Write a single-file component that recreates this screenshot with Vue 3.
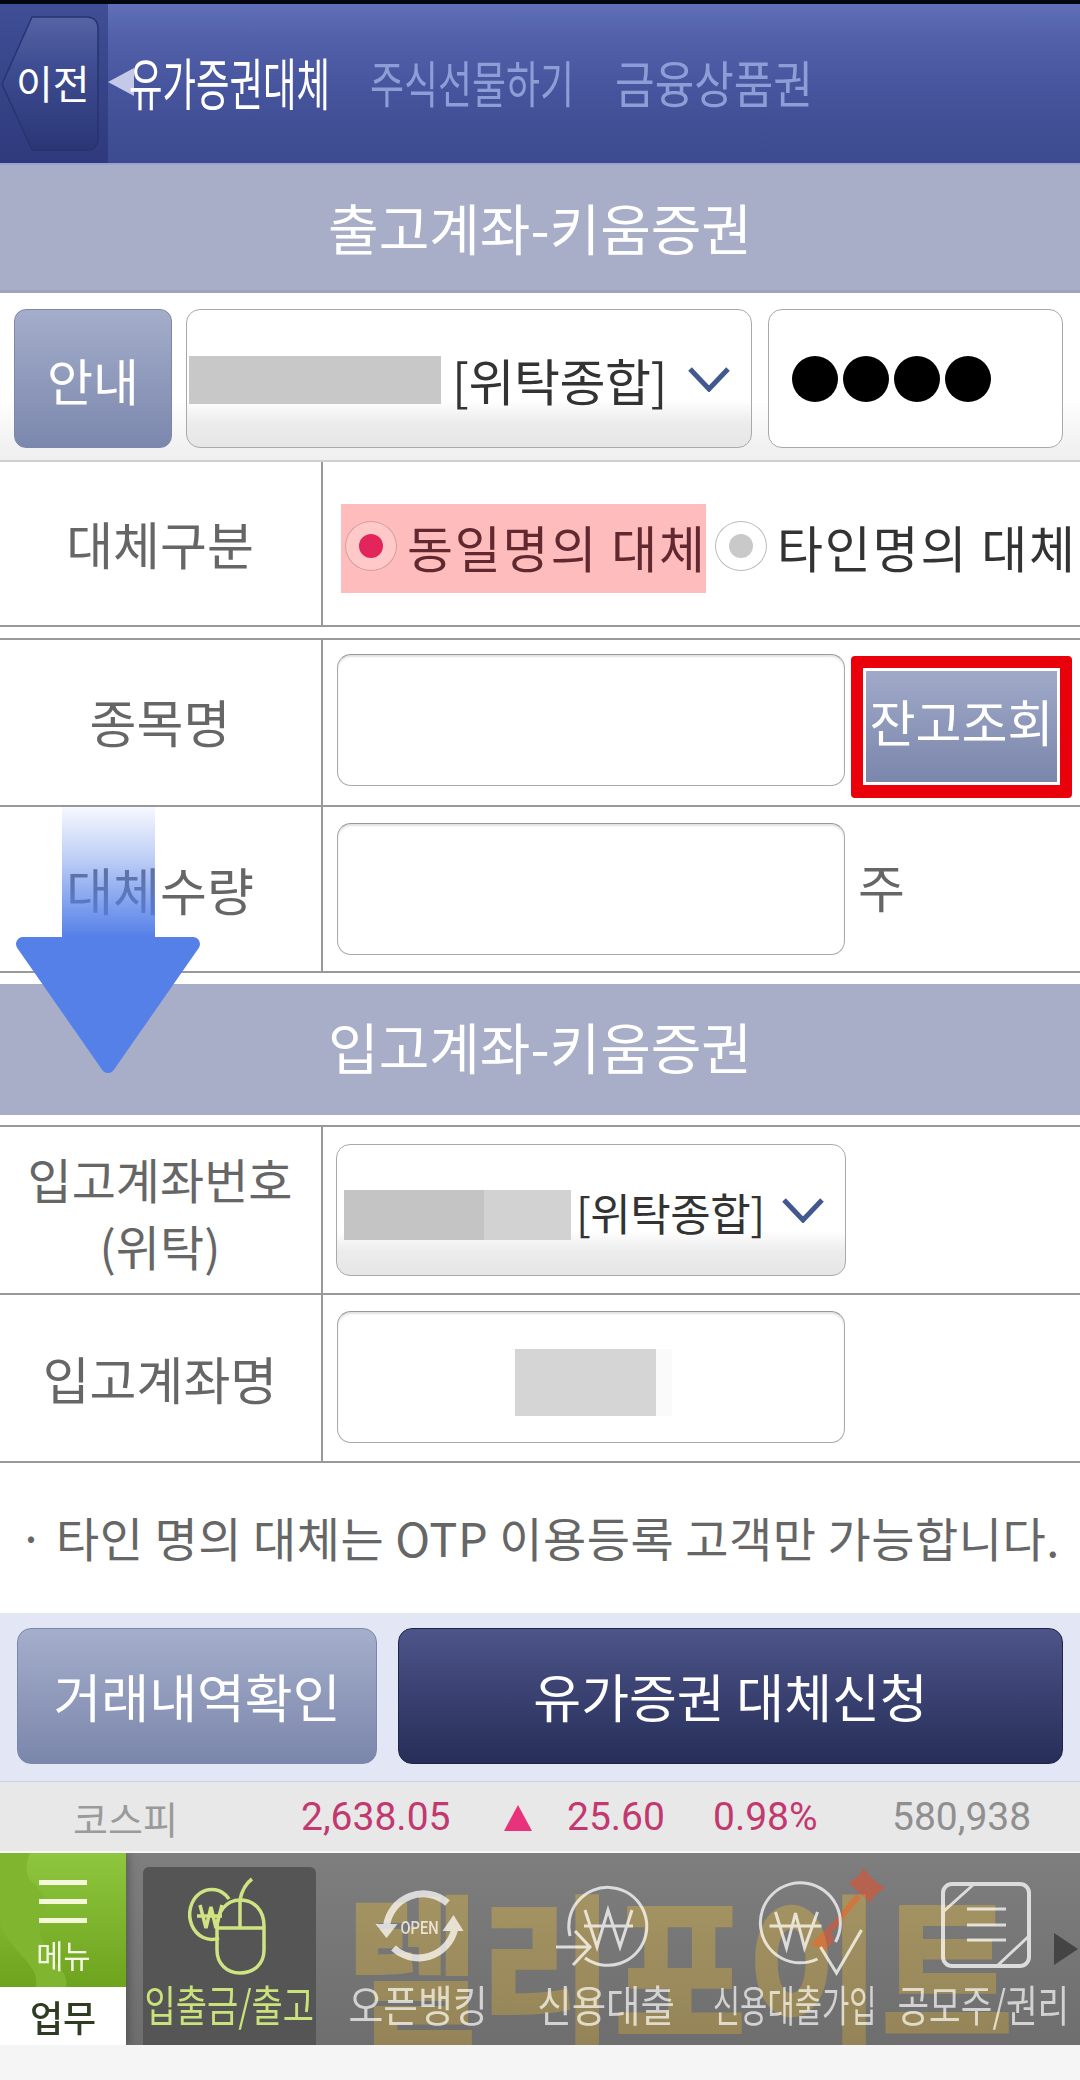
<script setup>
const tabs = [
  { key: 'mouse', label: '입출금/출고', sx: 0.79, box: '135 1868 188 110', active: true },
  { key: 'open', label: '오픈뱅킹', sx: 0.88, box: '323.5 1868 188 110' },
  { key: 'loan', label: '신용대출', sx: 0.87, box: '512 1868 188 110' },
  { key: 'join', label: '신용대출가입', sx: 0.69, box: '700.5 1868 188 110' },
  { key: 'ipo', label: '공모주/권리', sx: 0.8, box: '889 1868 188 110' }
]
const dots = [1, 2, 3, 4]
</script>

<template>
  <div class="page">
    <header class="top">
      <div class="back">
        <svg class="back-shape" viewBox="0 0 108 159" aria-hidden="true">
          <defs>
            <linearGradient id="bk" x1="0" y1="0" x2="0" y2="1">
              <stop offset="0" stop-color="#5664a6" />
              <stop offset="0.35" stop-color="#3f4d92" />
              <stop offset="1" stop-color="#2a3676" />
            </linearGradient>
          </defs>
          <path d="M2 80 L32 13 H86 Q98 13 98 25 V134 Q98 146 86 146 H32 Z" fill="url(#bk)" stroke="#28336f" stroke-width="1.5" />
        </svg>
        <span class="back-text">이전</span>
      </div>
      <div class="pointer"></div>
      <div class="ttab ttab-1"><span class="on">유가증권대체</span></div>
      <div class="ttab ttab-2"><span class="off s2">주식선물하기</span></div>
      <div class="ttab ttab-3"><span class="off s3">금융상품권</span></div>
    </header>

    <div class="section sec-1">출고계좌-키움증권</div>

    <div class="acct">
      <div class="info">안내</div>
      <div class="select sel-1">
        <i class="blur b1"></i>
        <span class="sel-text">[위탁종합]</span>
        <svg class="chev" viewBox="0 0 44 26" aria-hidden="true"><path d="M3 3 L22 23 L41 3" /></svg>
      </div>
      <div class="pw">
        <i v-for="d in dots" :key="d" class="dot"></i>
      </div>
    </div>

    <div class="row r-type">
      <div class="lab">대체구분</div>
      <div class="cell opts">
        <div class="opt picked">
          <span class="radio"><i class="rd red"></i></span>
          <span>동일명의 대체</span>
        </div>
        <div class="opt other">
          <span class="radio"><i class="rd gray"></i></span>
          <span>타인명의 대체</span>
        </div>
      </div>
    </div>

    <div class="row r-name">
      <div class="lab">종목명</div>
      <div class="cell fields">
        <div class="input"></div>
        <div class="redbox"><div class="query">잔고조회</div></div>
      </div>
    </div>

    <div class="row r-qty">
      <div class="lab">대체수량</div>
      <div class="cell fields">
        <div class="input"></div>
        <span class="unit">주</span>
      </div>
    </div>

    <div class="section sec-2">입고계좌-키움증권</div>

    <div class="row r-in">
      <div class="lab two">입고계좌번호<br />(위탁)</div>
      <div class="cell fields">
        <div class="select sel-2">
          <i class="blur b2"></i><i class="blur b3"></i>
          <span class="sel-text small">[위탁종합]</span>
          <svg class="chev" viewBox="0 0 44 26" aria-hidden="true"><path d="M3 3 L22 23 L41 3" /></svg>
        </div>
      </div>
    </div>

    <div class="row r-nm">
      <div class="lab">입고계좌명</div>
      <div class="cell fields">
        <div class="input nameval"><i class="blur b4"></i><i class="blur b5"></i></div>
      </div>
    </div>

    <p class="note">· 타인 명의 대체는 OTP 이용등록 고객만 가능합니다.</p>

    <div class="actions">
      <button class="btn light">거래내역확인</button>
      <button class="btn dark">유가증권 대체신청</button>
    </div>

    <div class="ticker">
      <span class="t-name">코스피</span>
      <span class="t-num n1">2,638.05</span>
      <i class="t-up"></i>
      <span class="t-num n2">25.60</span>
      <span class="t-num n3">0.98%</span>
      <span class="t-vol">580,938</span>
    </div>

    <nav class="nav">
      <div class="menu">
        <div class="menu-top">
          <svg class="swirl" viewBox="0 0 126 134" aria-hidden="true">
            <path d="M0 0 H30 C18 30 40 30 44 44 C52 70 30 60 44 90 C54 112 70 120 66 134 H36 C40 110 10 100 0 70 Z" fill="#7fb52f" />
          </svg>
          <div class="bars"><i></i><i></i><i></i></div>
          <span class="menu-text">메뉴</span>
        </div>
        <div class="menu-work">업무</div>
      </div>

      <div class="tabs">
        <div v-for="t in tabs" :key="t.key" class="tab" :class="{ active: t.active }">
          <div class="tab-in">
            <svg class="ico" :viewBox="t.box" aria-hidden="true">
              <g v-if="t.key === 'mouse'" class="st-g">
                <path d="M229 1899 A22 25 0 1 0 219 1938" />
                <path d="M200 1905 L206 1928 L211 1907 L216 1928 L222 1905 M197 1916 H222" stroke-width="2.5" />
                <path d="M240 1900 C226 1900 217 1912 217 1928 V1950 C217 1964 227 1973 240 1973 C254 1973 264 1964 264 1950 V1926 C264 1910 254 1900 240 1900 Z" />
                <path d="M217 1928 H264 M240 1900 V1928 M240 1900 C242 1890 245 1884 252 1879" />
              </g>
              <g v-else-if="t.key === 'open'">
                <path class="st-a" d="M386 1926 A37 37 0 0 1 447 1903" />
                <path class="st-a" d="M393 1948 A37 37 0 0 0 454 1930" />
                <path class="fl" d="M375 1924 H397 L386 1938 Z" />
                <path class="fl" d="M442 1931 H463 L453 1915 Z" />
                <text class="open-t" x="400" y="1934" textLength="38" lengthAdjust="spacingAndGlyphs">OPEN</text>
              </g>
              <g v-else-if="t.key === 'loan'" class="st-l">
                <path d="M570 1936 A39 39 0 1 1 585 1958" />
                <path d="M556 1947 H590 M575 1931 L590 1947 L573 1965" />
                <path d="M585 1910 L597 1947 L608 1910 L620 1947 L632 1910 M584 1926 H633" stroke-width="2.5" />
              </g>
              <g v-else-if="t.key === 'join'">
                <path class="dart" d="M816 1946 L858 1896" />
                <path class="dartf" d="M863 1868 C870 1878 878 1884 885 1888 C878 1892 873 1896 870 1903 C862 1896 854 1888 848 1883 C855 1879 860 1874 863 1868 Z" />
                <path class="dartf" d="M810 1945 C816 1938 822 1932 828 1927 C830 1933 832 1937 834 1940 C830 1944 827 1948 824 1951 C820 1948 815 1946 810 1945 Z" />
                <g class="st-l">
                  <path d="M817 1959 A40 40 0 1 1 835 1942" />
                  <path d="M820 1947 L836 1973 L861 1930" />
                  <path d="M775 1912 L786 1948 L795 1913 L804 1948 L817 1912 M769 1926 H821" stroke-width="2.5" />
                </g>
              </g>
              <g v-else class="st-l">
                <rect x="943" y="1884" width="86" height="82" rx="9" stroke-width="4" />
                <path d="M967 1909 H1006 M967 1925 H1006 M967 1940 H1006" stroke-width="3" />
                <path d="M944 1911 L973 1885 M997 1966 L1029 1936" stroke-width="9" />
              </g>
            </svg>
            <span class="tab-label" :style="{ transform: `scaleX(${t.sx})` }">{{ t.label }}</span>
          </div>
        </div>
      </div>

      <div class="watermark">텔리포이트</div>
      <i class="more"></i>
    </nav>

    <div class="foot"></div>

    <svg class="big-arrow" viewBox="0 800 220 280" aria-hidden="true">
      <defs>
        <linearGradient id="sh" x1="0" y1="805" x2="0" y2="937" gradientUnits="userSpaceOnUse">
          <stop offset="0" stop-color="#5580e8" stop-opacity="0.04" />
          <stop offset="0.4" stop-color="#5580e8" stop-opacity="0.38" />
          <stop offset="1" stop-color="#5580e8" stop-opacity="1" />
        </linearGradient>
      </defs>
      <rect x="62" y="805" width="93" height="132" fill="url(#sh)" />
      <path d="M23 944 H193 L108 1066 Z" fill="#5580e8" stroke="#5580e8" stroke-width="14" stroke-linejoin="round" />
    </svg>
  </div>
</template>

<style>
html, body { margin: 0; background: #fff; }
</style>

<style scoped>
.page {
  position: relative;
  width: 1080px;
  height: 2080px;
  overflow: hidden;
  background: #fff;
  font-family: "Noto Sans CJK KR", "Noto Sans", sans-serif;
  white-space: nowrap;
}
.top {
  display: flex;
  align-items: center;
  height: 159px;
  border-top: 4px solid #04060f;
  background: linear-gradient(#6070b8 0%, #5261a9 20%, #45549c 55%, #3c4a8e 100%);
  box-shadow: inset 0 -1px 0 #3a488c;
}
.back {
  position: relative;
  flex: none;
  width: 108px;
  height: 159px;
  background: linear-gradient(#3f4e96, #2e3a7c);
  display: flex;
  align-items: center;
}
.back-shape { position: absolute; inset: 0; width: 108px; height: 159px; }
.back-text {
  position: relative;
  margin-left: 16px;
  color: #fff;
  font-size: 40px;
  line-height: 1;
  margin-top: -4px;
}
.pointer {
  flex: none;
  width: 0;
  height: 0;
  border-top: 14px solid transparent;
  border-bottom: 14px solid transparent;
  border-right: 26px solid #c3c9e6;
  margin-top: -4px;
}
.ttab {
  flex: none;
  width: 200px;
  height: 60px;
  display: flex;
  justify-content: center;
  align-items: center;
  margin-top: -6px;
}
.ttab-1 { margin-left: -4px; }
.ttab-2 { margin-left: 42px; }
.ttab-3 { margin-left: 43px; width: 198px; }
.ttab span { flex: none; line-height: 1; }
.on { color: #fff; font-size: 56px; transform: scaleX(0.65); }
.off { color: #8f9dd6; font-size: 50px; }
.s2 { transform: scaleX(0.74); }
.s3 { transform: scaleX(0.86); }

.section {
  display: flex;
  align-items: center;
  justify-content: center;
  box-sizing: border-box;
  background: #a8aec8;
  color: #fff;
  font-size: 55px;
  line-height: 1;
}
.sec-1 {
  height: 130px;
  padding-bottom: 4px;
  box-shadow: inset 0 2px 0 #98a4cf, inset 0 -3px 0 #9ea4bc;
}
.sec-2 { height: 131px; margin-top: 11px; padding-bottom: 8px; }

.acct {
  display: flex;
  height: 169px;
  box-sizing: border-box;
  padding: 16px 17px 0 14px;
  background: linear-gradient(#fff 62%, #f0f0f0 95%);
  border-bottom: 2px solid #cfcfcf;
}
.info {
  flex: none;
  width: 158px;
  height: 139px;
  box-sizing: border-box;
  border: 1px solid #7d88a8;
  border-radius: 12px;
  background: linear-gradient(#a4adca, #7b87ad);
  color: #fff;
  font-size: 50px;
  line-height: 1;
  display: flex;
  align-items: center;
  justify-content: center;
}
.select {
  flex: none;
  display: flex;
  align-items: center;
  box-sizing: border-box;
  border: 1px solid #a9a9a9;
  border-radius: 14px;
  background: linear-gradient(#fff 66%, #ececec 82%, #e6e6e6);
}
.sel-1 { width: 566px; height: 139px; margin-left: 14px; padding-left: 2px; }
.sel-2 { width: 510px; height: 132px; margin: 2px 0 0 -1px; padding-left: 7px; }
.sel-text { color: #333; font-size: 50px; line-height: 1; margin-left: 11px; letter-spacing: -0.5px; }
.sel-text.small { font-size: 44px; margin-left: 5px; margin-top: 3px; }
.chev { flex: none; width: 44px; height: 26px; margin-left: 20px; }
.sel-2 .chev { margin-left: 16px; }
.chev path { fill: none; stroke: #42598f; stroke-width: 5; }
.blur { display: block; flex: none; }
.b1 { width: 252px; height: 48px; margin-top: 3px; background: #c8c8c8; }
.b2 { width: 140px; height: 50px; margin-top: 9px; background: #c4c4c4; }
.b3 { width: 87px; height: 50px; margin-top: 9px; background: #d2d2d2; }
.pw {
  flex: none;
  width: 295px;
  height: 139px;
  margin-left: 16px;
  box-sizing: border-box;
  border: 1px solid #a9a9a9;
  border-radius: 14px;
  background: #fff;
  display: flex;
  align-items: center;
  gap: 5px;
  padding-left: 23px;
}
.dot { display: block; width: 46px; height: 46px; border-radius: 50%; background: #000; }

.row {
  display: grid;
  grid-template-columns: 323px 1fr;
  box-sizing: border-box;
  border-bottom: 2px solid #999;
}
.lab {
  border-right: 2px solid #999;
  color: #666;
  font-size: 51px;
  line-height: 1;
  display: flex;
  align-items: center;
  justify-content: center;
  padding-right: 1px;
  box-sizing: border-box;
}
.lab.two { display: block; text-align: center; line-height: 67px; padding-top: 18px; font-size: 48px; }
.r-name .lab { padding-bottom: 3px; }
.r-type { height: 165px; }
.r-name { height: 169px; margin-top: 11px; border-top: 2px solid #999; }
.r-qty { height: 166px; }
.r-in { height: 170px; margin-top: 10px; border-top: 2px solid #999; }
.r-nm { height: 168px; }
.cell { display: flex; min-width: 0; }
.opts { align-items: flex-start; padding: 42px 0 0 18px; }
.opt { display: flex; align-items: center; font-size: 50px; line-height: 1; letter-spacing: 1.8px; }
.picked { background: #ffbcbc; color: #62282f; width: 365px; height: 89px; padding: 0 0 6px 4px; box-sizing: border-box; }
.other { color: #333; margin-left: 9px; height: 89px; padding-bottom: 6px; box-sizing: border-box; }
.radio {
  flex: none;
  width: 52px;
  height: 50px;
  box-sizing: border-box;
  border: 1px solid #bbb;
  border-radius: 50%;
  margin-right: 10px;
  display: flex;
  align-items: center;
  justify-content: center;
}
.picked .radio { background: #ffc9c9; border-color: #cfa0a0; }
.other .radio { background: #fff; }
.rd { display: block; width: 24px; height: 24px; border-radius: 50%; }
.red { background: #e2265c; }
.gray { background: #c9c9c9; }

.fields { align-items: flex-start; padding: 15px 0 0 14px; }
.input {
  flex: none;
  width: 508px;
  height: 132px;
  box-sizing: border-box;
  border: 1px solid #a9a9a9;
  border-top-color: #999;
  border-radius: 14px;
  background: #fff;
  box-shadow: inset 0 2px 2px #e2e2e2;
}
.r-name .input { margin-top: -1px; }
.r-qty .input, .nameval { margin-top: 1px; }
.redbox {
  flex: none;
  width: 221px;
  height: 142px;
  margin: 1px 0 0 6px;
  box-sizing: border-box;
  border: 12px solid #e9000a;
  border-bottom-width: 13px;
  border-radius: 4px;
  background: #fff;
  padding: 3px;
}
.query {
  height: 100%;
  box-sizing: border-box;
  padding-bottom: 14px;
  background: linear-gradient(#a0a9c8, #7a86ab);
  color: #fff;
  font-size: 50px;
  line-height: 1;
  display: flex;
  align-items: center;
  justify-content: center;
}
.unit { color: #666; font-size: 51px; line-height: 1; margin: 39px 0 0 13px; }
.nameval { display: flex; align-items: center; padding-left: 177px; }
.b4 { width: 141px; height: 67px; margin-top: 10px; background: #d5d5d5; }
.b5 { width: 16px; height: 67px; margin-top: 10px; background: #fafafa; }

.note {
  margin: 0;
  height: 150px;
  box-sizing: border-box;
  padding: 0 0 0 18px;
  color: #666;
  font-size: 47px;
  line-height: 148px;
  letter-spacing: 0.5px;
}
.actions {
  display: flex;
  height: 169px;
  box-sizing: border-box;
  padding: 15px 17px 0 17px;
  background: #e2e6f5;
  border-bottom: 1px solid #cfd3de;
}
.btn {
  flex: none;
  height: 136px;
  box-sizing: border-box;
  border-radius: 14px;
  color: #fff;
  font: inherit;
  font-size: 52px;
  line-height: 1;
  padding: 0;
}
.light { width: 360px; border: 1px solid #7d88a8; background: linear-gradient(#a5aecb, #7a86ab); }
.dark { width: 665px; margin-left: 21px; border: 1px solid #1f2544; background: linear-gradient(#4d5489, #262e58); }

.ticker {
  position: relative;
  height: 71px;
  background: #e8e8e8;
  box-shadow: inset 0 -2px 0 #f8f8f8;
  font-family: Roboto, "Noto Sans CJK KR", sans-serif;
  display: flex;
  align-items: center;
  line-height: 1;
}
.t-name { font-family: "Noto Sans CJK KR", sans-serif; color: #9a9a9a; font-size: 38px; margin-left: 73px; width: 228px; }
.t-num { color: #c2386f; font-size: 39px; }
.n1 { width: 203px; }
.t-up {
  display: block;
  width: 0;
  height: 0;
  border-left: 14px solid transparent;
  border-right: 14px solid transparent;
  border-bottom: 26px solid #e8327c;
  margin-right: 35px;
}
.n2 { width: 146px; }
.n3 { width: 179px; }
.t-vol { color: #8f8f8f; font-size: 39px; }

.nav {
  position: relative;
  isolation: isolate;
  display: flex;
  height: 192px;
  overflow: hidden;
  background: linear-gradient(#7e7e7e, #6e6e6e);
}
.menu { flex: none; width: 126px; box-shadow: 3px 0 8px rgba(0, 0, 0, 0.25); }
.menu-top {
  position: relative;
  height: 134px;
  background: linear-gradient(#8ec63f, #6ea31e);
  display: flex;
  flex-direction: column;
  align-items: center;
  overflow: hidden;
}
.swirl { position: absolute; inset: 0; width: 126px; height: 134px; }
.bars { position: relative; display: flex; flex-direction: column; gap: 14px; margin-top: 27px; }
.bars i { display: block; width: 48px; height: 5px; background: #f4f7d8; }
.menu-text { position: relative; color: #f4f7e4; font-size: 32px; line-height: 1; margin-top: 15px; transform: scaleX(0.92); }
.menu-work {
  height: 58px;
  background: #fff;
  color: #2e3d22;
  font-size: 36px;
  line-height: 1;
  font-weight: 500;
  display: flex;
  align-items: center;
  justify-content: center;
}
.tabs { flex: none; display: flex; margin-left: 9px; }
.tab { flex: none; width: 188.5px; display: flex; justify-content: center; }
.tab-in {
  width: 173px;
  height: 178px;
  margin-top: 14px;
  display: flex;
  flex-direction: column;
  align-items: center;
  border-radius: 6px 6px 0 0;
}
.active .tab-in { background: #555; }
.ico { flex: none; width: 188px; height: 110px; margin-top: 1px; fill: none; }
.st-g path { fill: none; stroke: #cfe382; stroke-width: 3.5; }
.st-a { fill: none; stroke: #dadada; stroke-width: 7; }
.fl { fill: #dadada; }
.open-t { fill: #dcdcdc; font-family: Roboto, sans-serif; font-size: 19px; font-weight: 500; }
.st-l path, .st-l rect { fill: none; stroke: #dcdcdc; }
.st-l path { stroke-width: 3; }
.dart { fill: none; stroke: #b5634f; stroke-width: 6; }
.dartf { fill: #b5634f; }
.tab-label {
  flex: none;
  margin-top: 4px;
  font-size: 43px;
  line-height: 1;
  color: #d2d2d2;
}
.active .tab-label { color: #c9e27c; }
.watermark {
  position: absolute;
  left: 346px;
  top: 14px;
  color: rgb(171, 153, 102);
  font-size: 165px;
  font-weight: 900;
  line-height: 192px;
  transform: scaleX(0.88);
  transform-origin: left center;
  mix-blend-mode: overlay;
  pointer-events: none;
}
.more {
  position: absolute;
  left: 1054px;
  top: 80px;
  width: 0;
  height: 0;
  border-top: 16px solid transparent;
  border-bottom: 16px solid transparent;
  border-left: 24px solid #444;
}
.foot { height: 35px; background: #f5f5f5; }
.big-arrow { position: absolute; left: 0; top: 800px; width: 220px; height: 280px; pointer-events: none; }
</style>
